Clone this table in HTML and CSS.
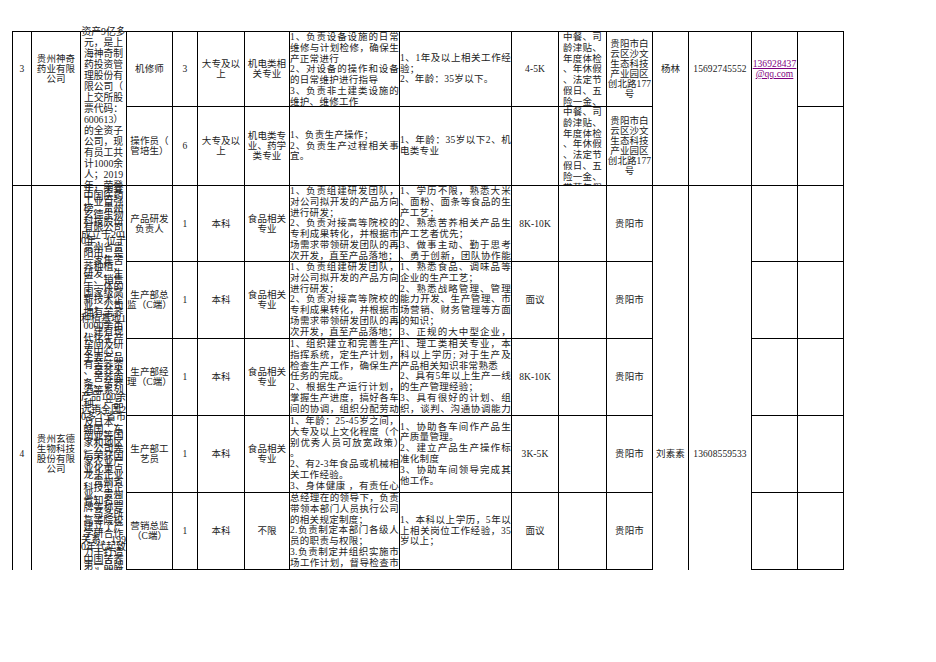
FILE: index.html
```html
<!DOCTYPE html>
<html lang="zh-CN">
<head>
<meta charset="utf-8">
<title>招聘岗位信息表</title>
<link rel="stylesheet" href="styles.css">
</head>
<body>
<div class="sheet">
  <!-- 公司 3 / 行 A -->
  <div class="c s2 up3"><div>3</div></div>
  <div class="c s2 up3 co"><div>贵州神奇药业有限公司</div></div>
  <div class="c s2 desc3"><div>资产9亿多元，是上海神奇制药投资管理股份有限公司（上交所股票代码：<span class="nw">600613）</span>的全资子公司，现有员工共计<span class="nw">1000</span>余人；<span class="nw">2019</span>年，荣登</div></div>
  <div class="c"><div>机修师</div></div>
  <div class="c"><div>3</div></div>
  <div class="c"><div>大专及以上</div></div>
  <div class="c"><div>机电类相关专业</div></div>
  <div class="c txt top"><div>1、负责设备设施的日常维修与计划检修，确保生产正常进行<br>2、对设备的操作和设备的日常维护进行指导<br>3、负责非土建类设施的维护、维修工作<br>4、完成领导交办的其他工作</div></div>
  <div class="c txt"><div>1、1年及以上相关工作经验；<br>2、年龄：35岁以下。</div></div>
  <div class="c"><div>4-5K</div></div>
  <div class="c ben"><div>中餐、司龄津贴、年度体检、年休假、法定节假日、五险一金、带薪年假</div></div>
  <div class="c"><div>贵阳市白云区沙文生态科技产业园区创北路177号</div></div>
  <div class="c s2 up3"><div>杨林</div></div>
  <div class="c s2 up3"><div>15692745552</div></div>
  <div class="c s2 up3"><div><a class="mail">136928437@qq.com</a></div></div>
  <div class="c"></div>

  <!-- 行 B -->
  <div class="c"><div>操作员（管培生）</div></div>
  <div class="c"><div>6</div></div>
  <div class="c"><div>大专及以上</div></div>
  <div class="c"><div>机电类专业、药学类专业</div></div>
  <div class="c txt"><div>1、负责生产操作；<br>2、负责生产过程相关事宜。</div></div>
  <div class="c txt"><div>1、年龄：35岁以下2、机电类专业</div></div>
  <div class="c"></div>
  <div class="c ben"><div>中餐、司龄津贴、年度体检、年休假、法定节假日、五险一金、带薪年假</div></div>
  <div class="c"><div>贵阳市白云区沙文生态科技产业园区创北路177号</div></div>
  <div class="c"></div>

  <!-- 公司 4 / 行 C -->
  <div class="c s5 dn4 nb"><div>4</div></div>
  <div class="c s5 dn4 nb co"><div>贵州玄德生物科技股份有限公司</div></div>
  <div class="c s5 desc4 nb"><div>年，荣登中国医药工业百强榜。贵州玄德生物科技股份有限公司成立于2010年，位于贵州省贵阳市，是一家集苦荞种植、研发、生产、销售于一体的国家级高新技术企业，公司拥有苦荞种植基地10000余亩，建有现代化生产车间及研发中心，主要产品有苦荞茶、苦荞米、苦荞面条、苦荞酒等系列产品100余种，产品远销全国20多个省市及日本、韩国、东南亚等国家和地区。公司先后荣获国家农业产业化重点龙头企业、贵州省科技型企业、贵州省知名品牌等称号，与多所高等院校建立了产学研合作关系，1990年代起致力于打造中国苦荞第一品牌，为消费者提供健康、安全、优质的食品。公司秉承诚信、创新、共赢的经营理念，诚邀各界优秀人才加盟，共创美好未来。</div></div>
  <div class="c"><div>产品研发负责人</div></div>
  <div class="c"><div>1</div></div>
  <div class="c"><div>本科</div></div>
  <div class="c"><div>食品相关专业</div></div>
  <div class="c txt top"><div>1、负责组建研发团队，对公司拟开发的产品方向进行研发；<br>2、负责对接高等院校的专利成果转化，并根据市场需求带领研发团队的再次开发，直至产品落地；<br>3、完成上级交办的其他工作。</div></div>
  <div class="c txt top"><div>1、学历不限，熟悉大米、面粉、面条等食品的生产工艺；<br>2、熟悉苦荞相关产品生产工艺者优先；<br>3、做事主动、勤于思考、勇于创新，团队协作能力强。</div></div>
  <div class="c"><div>8K-10K</div></div>
  <div class="c"></div>
  <div class="c"><div>贵阳市</div></div>
  <div class="c s5 dn4 nb"><div>刘素素</div></div>
  <div class="c s5 dn4 nb"><div>13608559533</div></div>
  <div class="c"></div>
  <div class="c"></div>

  <!-- 行 D -->
  <div class="c"><div>生产部总监（C端）</div></div>
  <div class="c"><div>1</div></div>
  <div class="c"><div>本科</div></div>
  <div class="c"><div>食品相关专业</div></div>
  <div class="c txt top"><div>1、负责组建研发团队，对公司拟开发的产品方向进行研发；<br>2、负责对接高等院校的专利成果转化，并根据市场需求带领研发团队的再次开发，直至产品落地；<br>3、完成上级交办的其他工作。</div></div>
  <div class="c txt top"><div>1、熟悉食品、调味品等企业的生产工艺；<br>2、熟悉战略管理、管理能力开发、生产管理、市场营销、财务管理等方面的知识；<br>3、正规的大中型企业，有生产管理经验者优先。</div></div>
  <div class="c"><div>面议</div></div>
  <div class="c"></div>
  <div class="c"><div>贵阳市</div></div>
  <div class="c"></div>
  <div class="c"></div>

  <!-- 行 E -->
  <div class="c"><div>生产部经理（C端）</div></div>
  <div class="c"><div>1</div></div>
  <div class="c"><div>本科</div></div>
  <div class="c"><div>食品相关专业</div></div>
  <div class="c txt top"><div>1、组织建立和完善生产指挥系统，定生产计划，检查生产工作，确保生产任务的完成。<br>2、根据生产运行计划，掌握生产进度，搞好各车间的协调，组织分配劳动力。</div></div>
  <div class="c txt top"><div>1、理工类相关专业，本科以上学历<span class="semi">;</span>对于生产及产品相关知识非常熟悉<br>2、具有5年以上生产一线的生产管理经验；<br>3、具有很好的计划、组织，谈判、沟通协调能力。</div></div>
  <div class="c"><div>8K-10K</div></div>
  <div class="c"></div>
  <div class="c"><div>贵阳市</div></div>
  <div class="c"></div>
  <div class="c"></div>

  <!-- 行 F -->
  <div class="c"><div>生产部工艺员</div></div>
  <div class="c"><div>1</div></div>
  <div class="c"><div>本科</div></div>
  <div class="c"><div>食品相关专业</div></div>
  <div class="c txt top"><div>1、年龄：25-45岁之间，大专及以上文化程度（个别优秀人员可放宽政策）。<br>2、有2-3年食品或机械相关工作经验。<br>3、身体健康 ，有责任心，吃苦耐劳。</div></div>
  <div class="c txt"><div>1、协助各车间作产品生产质量管理。<br>2、建立产品生产操作标准化制度<br>3、协助车间领导完成其他工作。</div></div>
  <div class="c"><div>3K-5K</div></div>
  <div class="c"></div>
  <div class="c"><div>贵阳市</div></div>
  <div class="c"></div>
  <div class="c"></div>

  <!-- 行 G -->
  <div class="c"><div>营销总监（C端）</div></div>
  <div class="c"><div>1</div></div>
  <div class="c"><div>本科</div></div>
  <div class="c"><div>不限</div></div>
  <div class="c txt top"><div>总经理在的领导下，负责带领本部门人员执行公司的相关规定制度；<br>2.负责制定本部门各级人员的职责与权限；<br>3.负责制定并组织实施市场工作计划，督导检查市场工作的执行情况。</div></div>
  <div class="c txt"><div>1、本科以上学历，5年以上相关岗位工作经验，35岁以上；</div></div>
  <div class="c"><div>面议</div></div>
  <div class="c"></div>
  <div class="c"><div>贵阳市</div></div>
  <div class="c"></div>
  <div class="c"></div>
</div>
</body>
</html>
```

FILE: styles.css
```css
* {
  box-sizing: border-box;
  margin: 0;
  padding: 0;
}

html,
body {
  background: #fff;
}

body {
  font-family: "Liberation Serif", "Noto Sans CJK SC", serif;
  color: #222;
}

.sheet {
  display: grid;
  grid-template-columns: 19px 49px 46px 46px 25px 47px 45px 110px 112px 47px 48px 46px 36px 63px 46px 46px;
  grid-template-rows: 75px 79px 76px 77px 77px 77px 77px;
  width: 832px;
  margin: 31px 0 0 12px;
  border-left: 1px solid #000;
  border-top: 1px solid #000;
}

.c {
  display: flex;
  align-items: center;
  overflow: hidden;
  border-right: 1px solid #000;
  border-bottom: 1px solid #000;
  font-size: 9.5px;
  line-height: 10px;
  letter-spacing: 0.1px;
}

.c > div {
  width: 100%;
  text-align: center;
  line-break: anywhere;
  word-break: break-all;
}

.nw {
  white-space: nowrap;
}

.semi {
  letter-spacing: 2.6px;
}

.s2 {
  grid-row: span 2;
}

.s5 {
  grid-row: span 5;
}

.up3 {
  padding-bottom: 79px;
}

.dn4 {
  padding-top: 152px;
}

.nb {
  border-bottom: none;
}

.co {
  padding-left: 2px;
  padding-right: 2px;
}

.txt {
  letter-spacing: 0.3px;
  line-height: 10.8px;
}

.txt > div {
  text-align: justify;
}

.top {
  align-items: flex-start;
}

.ben {
  align-items: flex-start;
  letter-spacing: 0.3px;
  line-height: 10.8px;
}

.desc3 {
  overflow: visible;
  font-size: 9.8px;
  line-height: 11px;
  letter-spacing: 0;
}

.desc4 {
  align-items: flex-start;
  font-size: 10px;
  line-height: 6.5px;
  letter-spacing: 0;
}

.mail {
  color: #800080;
  text-decoration: underline;
}
```
